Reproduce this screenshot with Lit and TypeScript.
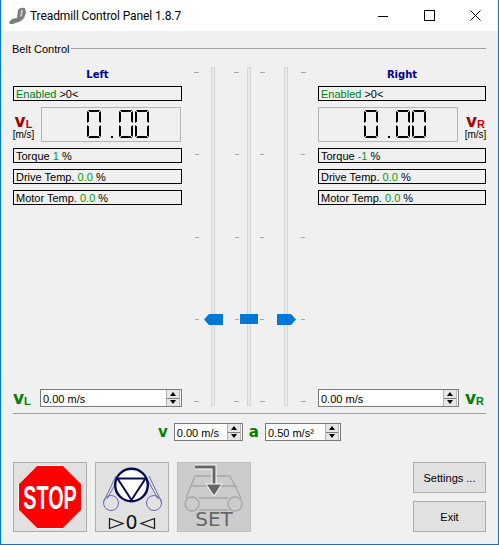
import { LitElement, html, css } from 'lit';
import { customElement } from 'lit/decorators.js';

// a..g segments lit per digit
const SEGMENTS: Record<string, string> = {
  '0': 'abcdef', '1': 'bc', '2': 'abdeg', '3': 'abcdg', '4': 'bcfg',
  '5': 'acdfg', '6': 'acdefg', '7': 'abc', '8': 'abcdefg', '9': 'abcdfg'
};

@customElement('app-root')
export class AppRoot extends LitElement {
  static styles = css`
    :host {
      display: block;
      font-family: 'Liberation Sans', Arial, sans-serif;
      font-size: 11px;
      color: #000;
    }
    .window {
      box-sizing: border-box;
      width: 499px;
      height: 545px;
      display: flex;
      flex-direction: column;
      background: #f0f0f0;
      border: 1px solid #0078d7;
      border-top: none;
    }
    .titlebar {
      height: 31px;
      flex: none;
      display: flex;
      align-items: center;
      background: #fff;
      font: 12px Roboto, sans-serif;
    }
    .app-icon { margin-left: 8px; width: 18px; height: 18px; }
    .title { margin-left: 3px; flex: 1; letter-spacing: -0.1px; }
    .win-btn { width: 46px; height: 31px; display: flex; align-items: center; justify-content: center; }
    .content {
      flex: 1;
      display: flex;
      flex-direction: column;
      padding: 10px 12px 12px 12px;
    }
    .legend {
      display: flex;
      align-items: center;
      height: 14px;
      margin-left: -1px;
      gap: 2px;
    }
    .legend span { padding-top: 2px; }
    .legend::after { content: ''; flex: 1; height: 1px; background: #a0a0a0; }
    .belt {
      display: grid;
      grid-template-columns: 169px 136px 168px;
      height: 340px;
      margin-top: 12px;
    }
    .side { display: flex; flex-direction: column; gap: 6px; }
    .side-name {
      height: 13px;
      font: bold 10px/16px 'DejaVu Sans', sans-serif;
      color: #000080;
      text-align: center;
    }
    .box {
      box-sizing: border-box;
      height: 15px;
      border: 1px solid #000;
      padding-left: 2px;
      line-height: 15px;
      white-space: nowrap;
    }
    .enabled { color: #007a1c; }
    .val { color: #00a000; }
    .reading { display: flex; height: 35px; }
    .unit-col {
      box-sizing: border-box;
      width: 21px;
      flex: none;
      padding-top: 6px;
      display: flex;
      flex-direction: column;
      align-items: center;
    }
    .side.l .unit-col { margin-right: 7px; }
    .side.r .unit-col { margin-left: 7px; }
    .side.l .lcd { margin-right: 1px; }
    .lcd {
      box-sizing: border-box;
      flex: 1;
      display: flex;
      justify-content: flex-end;
      gap: 2px;
      padding: 2px 31px 0 0;
      border: 1px solid;
      border-color: #a0a0a0 #f8f8f8 #f8f8f8 #a0a0a0;
      outline: 1px solid #b4b4b4;
      outline-offset: -1px;
    }
    .digit {
      width: 14px;
      height: 28px;
      display: grid;
      grid-template-columns: 2px 1fr 2px;
      grid-template-rows: 2px 1fr 2px 1fr 2px;
    }
    .seg { background: #000; }
    .seg.a { grid-area: 1 / 1 / 2 / 4; margin: 0 1px; clip-path: polygon(0 0, 100% 0, calc(100% - 1.5px) 100%, 1.5px 100%); }
    .seg.d { grid-area: 5 / 1 / 6 / 4; margin: 0 1px; clip-path: polygon(1.5px 0, calc(100% - 1.5px) 0, 100% 100%, 0 100%); }
    .seg.f, .seg.e { clip-path: polygon(0 0, 100% 1.5px, 100% calc(100% - 1.5px), 0 100%); }
    .seg.b, .seg.c { clip-path: polygon(0 1.5px, 100% 0, 100% 100%, 0 calc(100% - 1.5px)); }
    .seg.f { grid-area: 1 / 1 / 3 / 2; margin: 1px 0 0; }
    .seg.b { grid-area: 1 / 3 / 3 / 4; margin: 1px 0 0; }
    .seg.g { grid-area: 3 / 2 / 4 / 3; }
    .seg.e { grid-area: 4 / 1 / 6 / 2; margin: 0 0 1px; }
    .seg.c { grid-area: 4 / 3 / 6 / 4; margin: 0 0 1px; }
    .dot { width: 14px; display: flex; align-items: flex-end; height: 28px; }
    .dot::before { content: ''; width: 2px; height: 2px; background: #000; margin-left: 8px; }
    .sym { font: bold 17px/16px 'DejaVu Sans', sans-serif; white-space: nowrap; }
    .sym sub { font: bold 11px/0 'Liberation Sans', sans-serif; vertical-align: -1px; }
    .red { color: #a80000; }
    .red sub { color: #c80000; }
    .green { color: #008000; }
    .units { font-size: 10px; line-height: 11px; }
    .speed { margin-top: auto; display: flex; align-items: center; }
    .speed .sym { flex: none; width: 27px; box-sizing: border-box; }
    .speed.r .sym { padding-left: 6px; }
    .speed .spin { flex: 1; }
    .spin {
      box-sizing: border-box;
      height: 18px;
      border: 1px solid #7a7a7a;
      background: #fff;
      display: flex;
      align-items: center;
      padding-left: 2px;
      white-space: nowrap;
    }
    .spin .text { flex: 1; padding-top: 2px; }
    .stepper {
      box-sizing: border-box;
      width: 14px;
      height: 16px;
      margin-right: 1px;
      display: flex;
      flex-direction: column;
      background: #e6e6e6;
      border: solid #b4b4b4;
      border-width: 0 1px;
    }
    .stepper i { flex: 1; display: flex; align-items: center; justify-content: center; }
    .stepper i:first-child { border-bottom: 1px solid #7a7a7a; }
    .stepper i::before {
      content: '';
      border-left: 3.5px solid transparent;
      border-right: 3.5px solid transparent;
    }
    .stepper .up::before { border-bottom: 4px solid #000; }
    .stepper .down::before { border-top: 4px solid #000; }
    .sliders { display: flex; height: 339px; }
    .ticks {
      box-sizing: border-box;
      width: 5px;
      padding: 5px 0 4px;
      display: flex;
      flex-direction: column;
      justify-content: space-between;
    }
    .ticks.lt { align-items: flex-end; }
    .ticks.rt { align-items: flex-start; }
    .ticks i { width: 4px; height: 1px; background: #a8a89c; }
    .ticks i:first-child, .ticks i:last-child { width: 5px; }
    .track {
      position: relative;
      box-sizing: border-box;
      width: 4px;
      background: #e7eaea;
      border: 1px solid #d6d6d6;
    }
    .thumb {
      position: absolute;
      top: 246px;
      left: -8px;
      width: 19px;
      height: 11px;
      background: #0078d7;
    }
    .thumb.pl { clip-path: polygon(0 50%, 5px 0, 100% 0, 100% 100%, 5px 100%); }
    .thumb.pr { clip-path: polygon(0 0, 14px 0, 100% 50%, 14px 100%, 0 100%); }
    .thumb.mid { width: 18px; height: 10px; }
    .sep { height: 1px; background: #a0a0a0; margin-top: 6px; flex: none; }
    .ramp {
      display: flex;
      justify-content: center;
      align-items: center;
      gap: 6px;
      margin-top: 9px;
    }
    .ramp .sym { font-size: 15px; }
    .w69 { width: 69px; }
    .w76 { width: 76px; }
    .actions { display: flex; margin-top: 21px; gap: 8px; }
    .tool {
      box-sizing: border-box;
      width: 74px;
      height: 70px;
      padding: 0;
      border: 1px solid #adadad;
      background: #e1e1e1;
    }
    .tool svg { display: block; margin: -1px; }
    .tool.off { background: #cccccc; border-color: #bfbfbf; }
    .cmds { margin-left: auto; display: flex; flex-direction: column; gap: 8px; }
    .cmd {
      box-sizing: border-box;
      width: 73px;
      height: 31px;
      border: 1px solid #adadad;
      background: #e1e1e1;
      font: 11px 'Liberation Sans', Arial, sans-serif;
      color: #000;
      padding: 0;
    }
  `;

  lcd(value: string) {
    return html`<div class="lcd" role="img" aria-label=${value}>
      ${[...value].map((ch) =>
        ch === '.'
          ? html`<div class="dot"></div>`
          : html`<div class="digit">${[...SEGMENTS[ch]].map((s) => html`<span class="seg ${s}"></span>`)}</div>`
      )}
    </div>`;
  }

  spin(value: string, cls = '') {
    return html`<div class="spin ${cls}">
      <span class="text">${value}</span>
      <div class="stepper"><i class="up"></i><i class="down"></i></div>
    </div>`;
  }

  side(name: string, letter: string, torque: string, right: boolean) {
    const unit = html`<div class="unit-col">
      <span class="sym red">v<sub>${letter}</sub></span>
      <span class="units">[m/s]</span>
    </div>`;
    const sym = html`<span class="sym green">v<sub>${letter}</sub></span>`;
    return html`<div class="side ${right ? 'r' : 'l'}">
      <div class="side-name">${name}</div>
      <div class="box"><span class="enabled">Enabled</span> &gt;0&lt;</div>
      <div class="reading">
        ${right ? html`${this.lcd('0.00')}${unit}` : html`${unit}${this.lcd('0.00')}`}
      </div>
      <div class="box">Torque <span class="val">${torque}</span> %</div>
      <div class="box">Drive Temp. <span class="val">0.0</span> %</div>
      <div class="box">Motor Temp. <span class="val">0.0</span> %</div>
      <div class="speed ${right ? 'r' : 'l'}">
        ${right ? html`${this.spin('0.00 m/s')}${sym}` : html`${sym}${this.spin('0.00 m/s')}`}
      </div>
    </div>`;
  }

  ticks(side: string, gap: number) {
    return html`<div class="ticks ${side}" style="margin-left:${gap}px">
      <i></i><i></i><i></i><i></i><i></i>
    </div>`;
  }

  track(gap: number, thumb: string) {
    return html`<div class="track" style="margin-left:${gap}px"><div class="thumb ${thumb}"></div></div>`;
  }

  stopIcon() {
    return html`<svg width="74" height="70" viewBox="0 0 74 70">
      <polygon points="24,3.5 50,3.5 68.5,22 68.5,48 50,66.5 24,66.5 5.5,48 5.5,22" fill="#ff0000" stroke="#fff" stroke-width="1" />
      <text transform="translate(37 47) scale(.66 1.08)" text-anchor="middle" fill="#fff" font-family="Liberation Sans" font-weight="bold" font-size="30">STOP</text>
    </svg>`;
  }

  zeroIcon() {
    return html`<svg width="74" height="70" viewBox="0 0 74 70">
      <g fill="none" stroke="#6a6ab4" stroke-width="1">
        <circle cx="16" cy="41" r="7.5" />
        <circle cx="59" cy="41" r="7.5" />
        <path d="M8.5 40 L21 14 M12 37 L23 17 M66.5 40 L54 14 M63 37 L52 17" />
      </g>
      <circle cx="36.5" cy="23" r="16.3" fill="#fff" stroke="#0a0a50" stroke-width="2.4" />
      <path d="M22.5 16.5 H50.5 L36.5 38 Z" fill="none" stroke="#0a0a50" stroke-width="2" />
      <g fill="none" stroke="#111" stroke-width="1.2">
        <path d="M14.5 56.5 V66.5 L28 61.5 Z" />
        <path d="M59.5 56.5 V66.5 L46 61.5 Z" />
      </g>
      <text x="36.5" y="67" text-anchor="middle" fill="#111" font-family="DejaVu Sans" font-size="19">0</text>
    </svg>`;
  }

  setIcon() {
    return html`<svg width="74" height="70" viewBox="0 0 74 70">
      <g fill="none" stroke="#a6a6a6" stroke-width="1.3">
        <circle cx="15" cy="42" r="7" />
        <circle cx="58" cy="42" r="7" />
        <path d="M9 36 L18 14 H53 L64 36 M13 24 H60 M22 36 H51 M22 48 H51" />
      </g>
      <path d="M18 5 H37 V29" fill="none" stroke="#fff" stroke-width="5" />
      <path d="M18 5 H37 V27" fill="none" stroke="#666" stroke-width="3" />
      <path d="M29 22 H45 L37 34 Z" fill="#666" stroke="#fff" stroke-width="1" />
      <text x="37" y="64" text-anchor="middle" fill="#666" font-family="DejaVu Sans" font-size="20">SET</text>
    </svg>`;
  }

  render() {
    return html`<div class="window">
      <div class="titlebar">
        <svg class="app-icon" viewBox="0 0 18 18">
          <path d="M0 15 L3 12 L8 11 L9 3 Q11 0 16 1 L17 6 L15 11 L12 14 L4 17 L1 17 Z" fill="#7c7c7c" />
          <path d="M12 3 L14 3 L13 9 L11 10 Z" fill="#c8c8c8" />
        </svg>
        <span class="title">Treadmill Control Panel 1.8.7</span>
        <div class="win-btn"><svg width="10" height="10"><path d="M0 5.5 H10" stroke="#000" fill="none" /></svg></div>
        <div class="win-btn"><svg width="11" height="11"><rect x="0.5" y="0.5" width="10" height="10" stroke="#000" fill="none" /></svg></div>
        <div class="win-btn"><svg width="11" height="11"><path d="M0.5 0.5 L10.5 10.5 M10.5 0.5 L0.5 10.5" stroke="#000" fill="none" /></svg></div>
      </div>
      <div class="content">
        <div class="legend"><span>Belt Control</span></div>
        <div class="belt">
          ${this.side('Left', 'L', '1', false)}
          <div class="sliders">
            ${this.ticks('lt', 12)}
            ${this.track(12, 'pl')}
            ${this.ticks('lt', 19)}
            ${this.track(8, 'mid')}
            ${this.ticks('rt', 9)}
            ${this.track(19, 'pr')}
            ${this.ticks('rt', 13)}
          </div>
          ${this.side('Right', 'R', '-1', true)}
        </div>
        <div class="sep"></div>
        <div class="ramp">
          <span class="sym green">v</span>
          ${this.spin('0.00 m/s', 'w69')}
          <span class="sym green">a</span>
          ${this.spin('0.50 m/s²', 'w76')}
        </div>
        <div class="actions">
          <button class="tool">${this.stopIcon()}</button>
          <button class="tool">${this.zeroIcon()}</button>
          <button class="tool off">${this.setIcon()}</button>
          <div class="cmds">
            <button class="cmd">Settings ...</button>
            <button class="cmd">Exit</button>
          </div>
        </div>
      </div>
    </div>`;
  }
}
